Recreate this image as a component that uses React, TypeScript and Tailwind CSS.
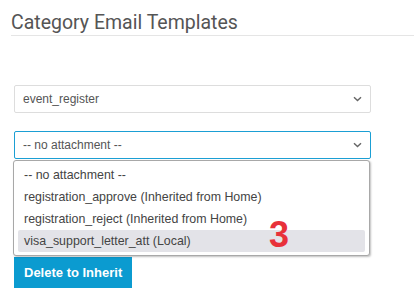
import React from "react";

function Chevron() {
  return (
    <svg width="9" height="6" viewBox="0 0 9 6" className="shrink-0">
      <path d="M1 1.2 L4.5 4.6 L8 1.2" fill="none" stroke="#666" strokeWidth="1.4" />
    </svg>
  );
}

export default function App() {
  const items = [
    "-- no attachment --",
    "registration_approve (Inherited from Home)",
    "registration_reject (Inherited from Home)",
    "visa_support_letter_att (Local)",
  ];
  return (
    <div className="w-[414px] h-[295px] bg-white overflow-hidden" style={{ fontFamily: '"Liberation Sans", Arial, sans-serif' }}>
      <div className="pl-[11px] pt-[11px]">
        <h2
          className="text-[19.5px] leading-[24px] text-[#555] border-b border-[#e5e5e5] font-normal"
          style={{ fontFamily: 'Roboto, "Liberation Sans", sans-serif' }}
        >
          Category Email Templates
        </h2>
      </div>
      <div className="pl-[14px] pt-[49px] w-[371px]">
        <div className="h-[28px] border border-[#ddd] rounded-[2px] flex items-center justify-between pl-[8px] pr-[8px] text-[12px] text-[#555]">
          <span>event_register</span>
          <Chevron />
        </div>
        <div className="relative mt-[18px]">
          <div className="h-[28px] border border-[#1b9fd4] rounded-[2px] flex items-center justify-between pl-[8px] pr-[8px] text-[12px] text-[#555]">
            <span>-- no attachment --</span>
            <Chevron />
          </div>
          <div className="absolute left-[-1px] top-[29px] w-[357px] bg-white border border-[#a8a8a8] rounded-[3px] shadow-[1px_1px_2px_rgba(0,0,0,0.25)] pt-[3px] pb-[3px] px-[4px] z-10">
            {items.map((t, i) => (
              <div
                key={t}
                className={
                  "h-[22px] flex items-center pl-[6px] text-[12.4px] text-[#444] rounded-[2px] relative " +
                  (i === 3 ? "bg-[#e3e3e8]" : "")
                }
              >
                {t}
                {i === 3 && (
                  <span className="absolute left-[251px] top-[-13px] text-[36px] leading-[36px] font-bold text-[#e8313a]">
                    3
                  </span>
                )}
              </div>
            ))}
          </div>
        </div>
        <div className="mt-[98px]">
          <button className="h-[31px] px-[10px] bg-[#0b9bd0] text-white text-[13px] font-bold">
            Delete to Inherit
          </button>
        </div>
      </div>
    </div>
  );
}
